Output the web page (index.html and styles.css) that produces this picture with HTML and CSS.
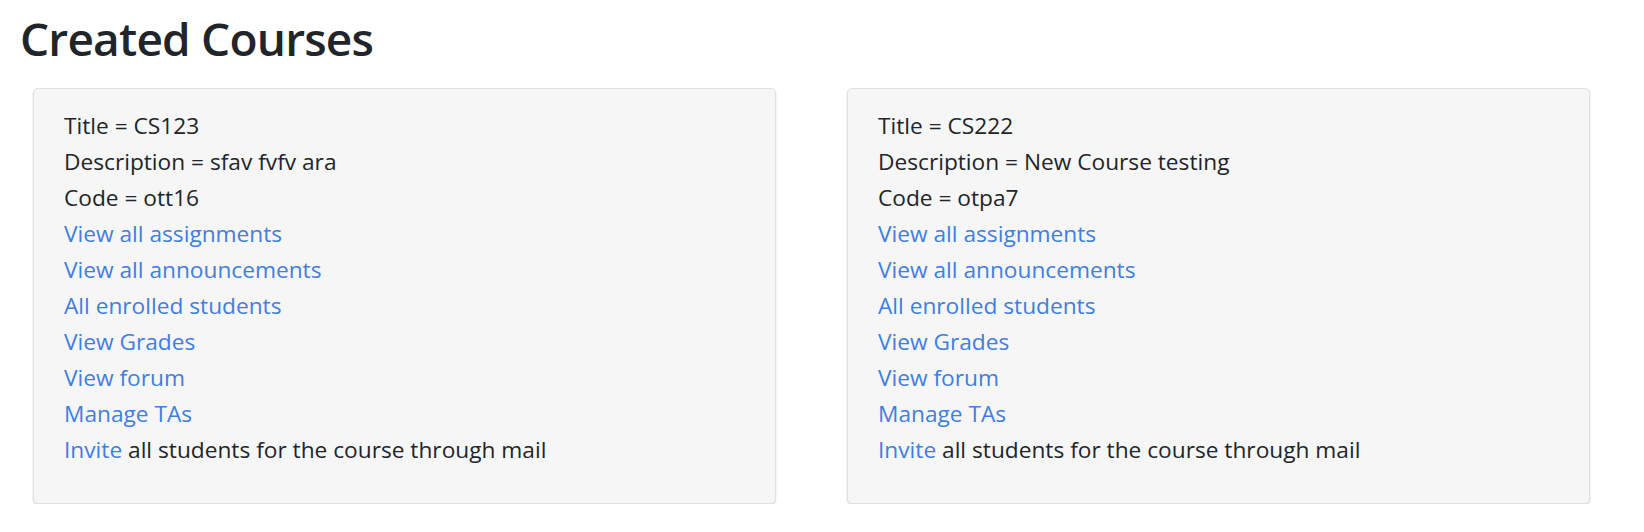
FILE: index.html
```html
<!DOCTYPE html>
<html lang="en">
<head>
<meta charset="utf-8">
<title>Created Courses</title>
<link rel="stylesheet" href="styles.css">
</head>
<body>
<h1 class="page-title">Created Courses</h1>
<div class="course-grid">
  <div class="course-card">
    <p class="line">Title = CS123</p>
    <p class="line">Description = sfav fvfv ara</p>
    <p class="line">Code = ott16</p>
    <a class="line link" href="#">View all assignments</a>
    <a class="line link" href="#">View all announcements</a>
    <a class="line link" href="#">All enrolled students</a>
    <a class="line link" href="#">View Grades</a>
    <a class="line link" href="#">View forum</a>
    <a class="line link" href="#">Manage TAs</a>
    <p class="line"><a class="link" href="#">Invite</a> all students for the course through mail</p>
  </div>
  <div class="course-card">
    <p class="line">Title = CS222</p>
    <p class="line">Description = New Course testing</p>
    <p class="line">Code = otpa7</p>
    <a class="line link" href="#">View all assignments</a>
    <a class="line link" href="#">View all announcements</a>
    <a class="line link" href="#">All enrolled students</a>
    <a class="line link" href="#">View Grades</a>
    <a class="line link" href="#">View forum</a>
    <a class="line link" href="#">Manage TAs</a>
    <p class="line"><a class="link" href="#">Invite</a> all students for the course through mail</p>
  </div>
</div>
</body>
</html>
```
FILE: styles.css
```css
html, body {
  margin: 0;
  padding: 0;
  background: #ffffff;
}
body {
  font-family: "Open Sans", "Noto Sans", sans-serif;
  color: #212529;
  font-size: 22.7px;
  line-height: 36px;
}
.page-title {
  margin: 0;
  padding: 8px 0 0 20px;
  font-size: 46px;
  line-height: 60px;
  letter-spacing: -0.8px;
  font-weight: 600;
  color: #212529;
}
.course-grid {
  display: grid;
  grid-template-columns: 1fr 1fr;
  column-gap: 71px;
  padding: 20px 54px 0 33px;
}
.course-card {
  display: flex;
  flex-direction: column;
  align-items: flex-start;
  background: #f6f6f6;
  border: 1px solid #e0e0e0;
  border-radius: 5px;
  box-shadow: 0 1px 2px rgba(0, 0, 0, 0.15);
  padding: 19px 28px 35px 30px;
}
.line {
  margin: 0;
}
.link {
  color: #3f7ee2;
  text-decoration: none;
}
```
